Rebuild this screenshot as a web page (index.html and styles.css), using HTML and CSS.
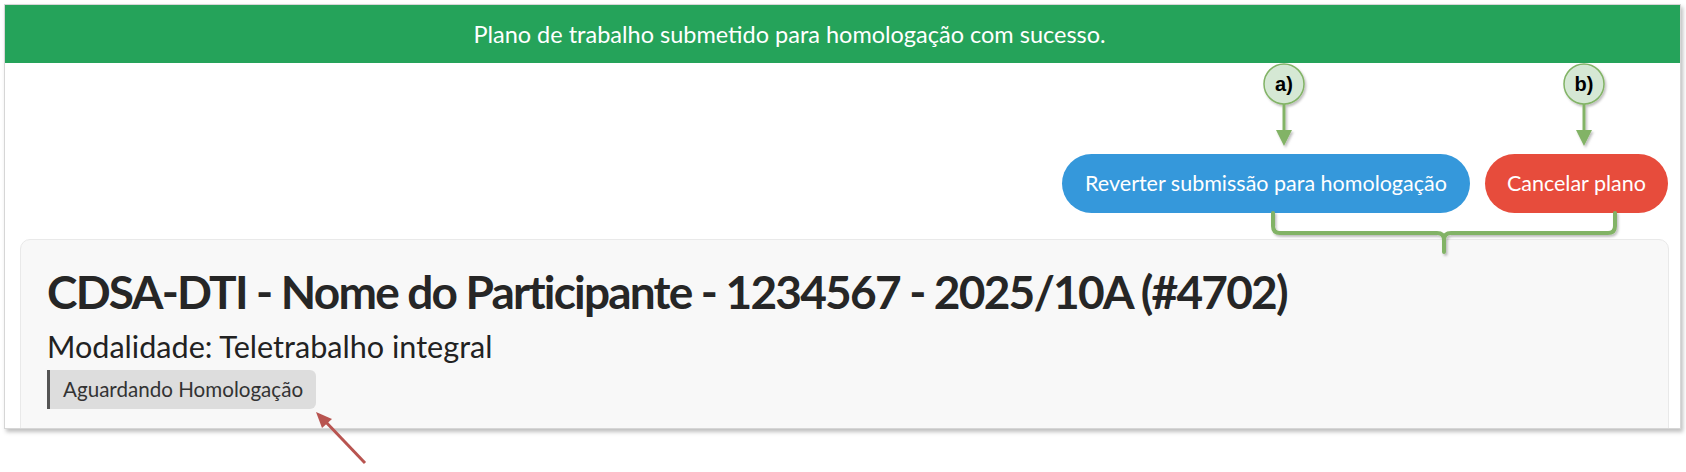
FILE: index.html
```html
<!DOCTYPE html>
<html lang="pt-BR">
<head>
    <meta charset="UTF-8">
    <title>Plano de trabalho - Homologação</title>
    <link rel="stylesheet" href="styles.css">
</head>
<body>
    <div class="shot">
        <div class="alert-success">Plano de trabalho submetido para homologação com sucesso.</div>
        <div class="actions">
            <button class="btn btn-blue">Reverter submissão para homologação</button>
            <button class="btn btn-red">Cancelar plano</button>
        </div>
        <div class="plan-card">
            <h2 class="plan-title">CDSA-DTI - Nome do Participante - 1234567 - 2025/10A (#4702)</h2>
            <div class="plan-mode">Modalidade: Teletrabalho integral</div>
            <span class="status-badge">Aguardando Homologação</span>
        </div>
    </div>

    <!-- annotation layer drawn over the screenshot -->
    <svg class="notes" width="1686" height="472" viewBox="0 0 1686 472">
        <defs>
            <filter id="soft" x="-20%" y="-20%" width="140%" height="140%">
                <feDropShadow dx="1.5" dy="2" stdDeviation="1.2" flood-color="#000" flood-opacity="0.25"/>
            </filter>
        </defs>
        <g filter="url(#soft)">
            <circle cx="1284" cy="84" r="20" fill="#d5e8d4" stroke="#82b366" stroke-width="1.5"/>
            <line x1="1284" y1="104" x2="1284" y2="132" stroke="#82b366" stroke-width="3"/>
            <polygon points="1276,130 1292,130 1284,146" fill="#82b366"/>

            <circle cx="1584" cy="84" r="20" fill="#d5e8d4" stroke="#82b366" stroke-width="1.5"/>
            <line x1="1584" y1="104" x2="1584" y2="132" stroke="#82b366" stroke-width="3"/>
            <polygon points="1576,130 1592,130 1584,146" fill="#82b366"/>

            <path d="M1273 213 V226 Q1273 233 1280 233 H1437 Q1444 233 1444 240 V252 M1444 240 Q1444 233 1451 233 H1608 Q1615 233 1615 226 V213"
                  fill="none" stroke="#82b366" stroke-width="4" stroke-linecap="round"/>
        </g>
        <text class="note-label" x="1284" y="91">a)</text>
        <text class="note-label" x="1584" y="91">b)</text>

        <line x1="365" y1="463" x2="323" y2="419" stroke="#b85450" stroke-width="3"/>
        <polygon points="316,412 332,419 322,428" fill="#b85450"/>
    </svg>
</body>
</html>
```

FILE: styles.css
```css
body {
    margin: 0;
    background: #fff;
    font-family: Lato, "Open Sans", sans-serif;
    color: #222;
    position: relative;
    width: 1686px;
    height: 472px;
    overflow: hidden;
}
.shot {
    margin: 4px 0 0 4px;
    width: 1675px;
    height: 423px;
    border: 1px solid #d6d6d6;
    box-shadow: 2px 3px 4px rgba(0,0,0,0.25);
    background: #fff;
    overflow: hidden;
}
.alert-success {
    height: 58px;
    background: #25a35a;
    color: #fff;
    font-size: 23.5px;
    line-height: 58px;
    text-align: center;
    padding-right: 106px;
}
.actions {
    display: flex;
    justify-content: flex-end;
    gap: 15px;
    padding: 91px 12px 0 0;
}
.btn {
    font-family: inherit;
    font-size: 21.5px;
    line-height: 25px;
    color: #fff;
    border: none;
    border-radius: 30px;
    padding: 17px 23px;
}
.btn-blue {
    background: #3598db;
}
.btn-red {
    background: #e74c3c;
    padding: 17px 22px;
}
.plan-card {
    margin: 26px 11px 0 15px;
    height: 220px;
    background: #f8f8f8;
    border: 1px solid #e9e9e9;
    border-radius: 10px;
    padding: 24px 26px 0;
}
.plan-title {
    margin: 0;
    font-size: 46px;
    line-height: 56px;
    font-weight: 700;
    letter-spacing: -1.8px;
    color: #262626;
}
.plan-mode {
    margin-top: 10px;
    font-size: 30.6px;
    line-height: 34px;
}
.status-badge {
    display: inline-block;
    margin-top: 6px;
    background: #dddddd;
    border-left: 3px solid #555;
    border-radius: 0 6px 6px 0;
    padding: 7px 13px;
    font-size: 20.6px;
    line-height: 25px;
    color: #333;
}
.notes {
    position: absolute;
    left: 0;
    top: 0;
    pointer-events: none;
}
.note-label {
    font-family: "Liberation Sans", Arial, sans-serif;
    font-weight: 700;
    font-size: 20px;
    text-anchor: middle;
    fill: #000;
}
```
